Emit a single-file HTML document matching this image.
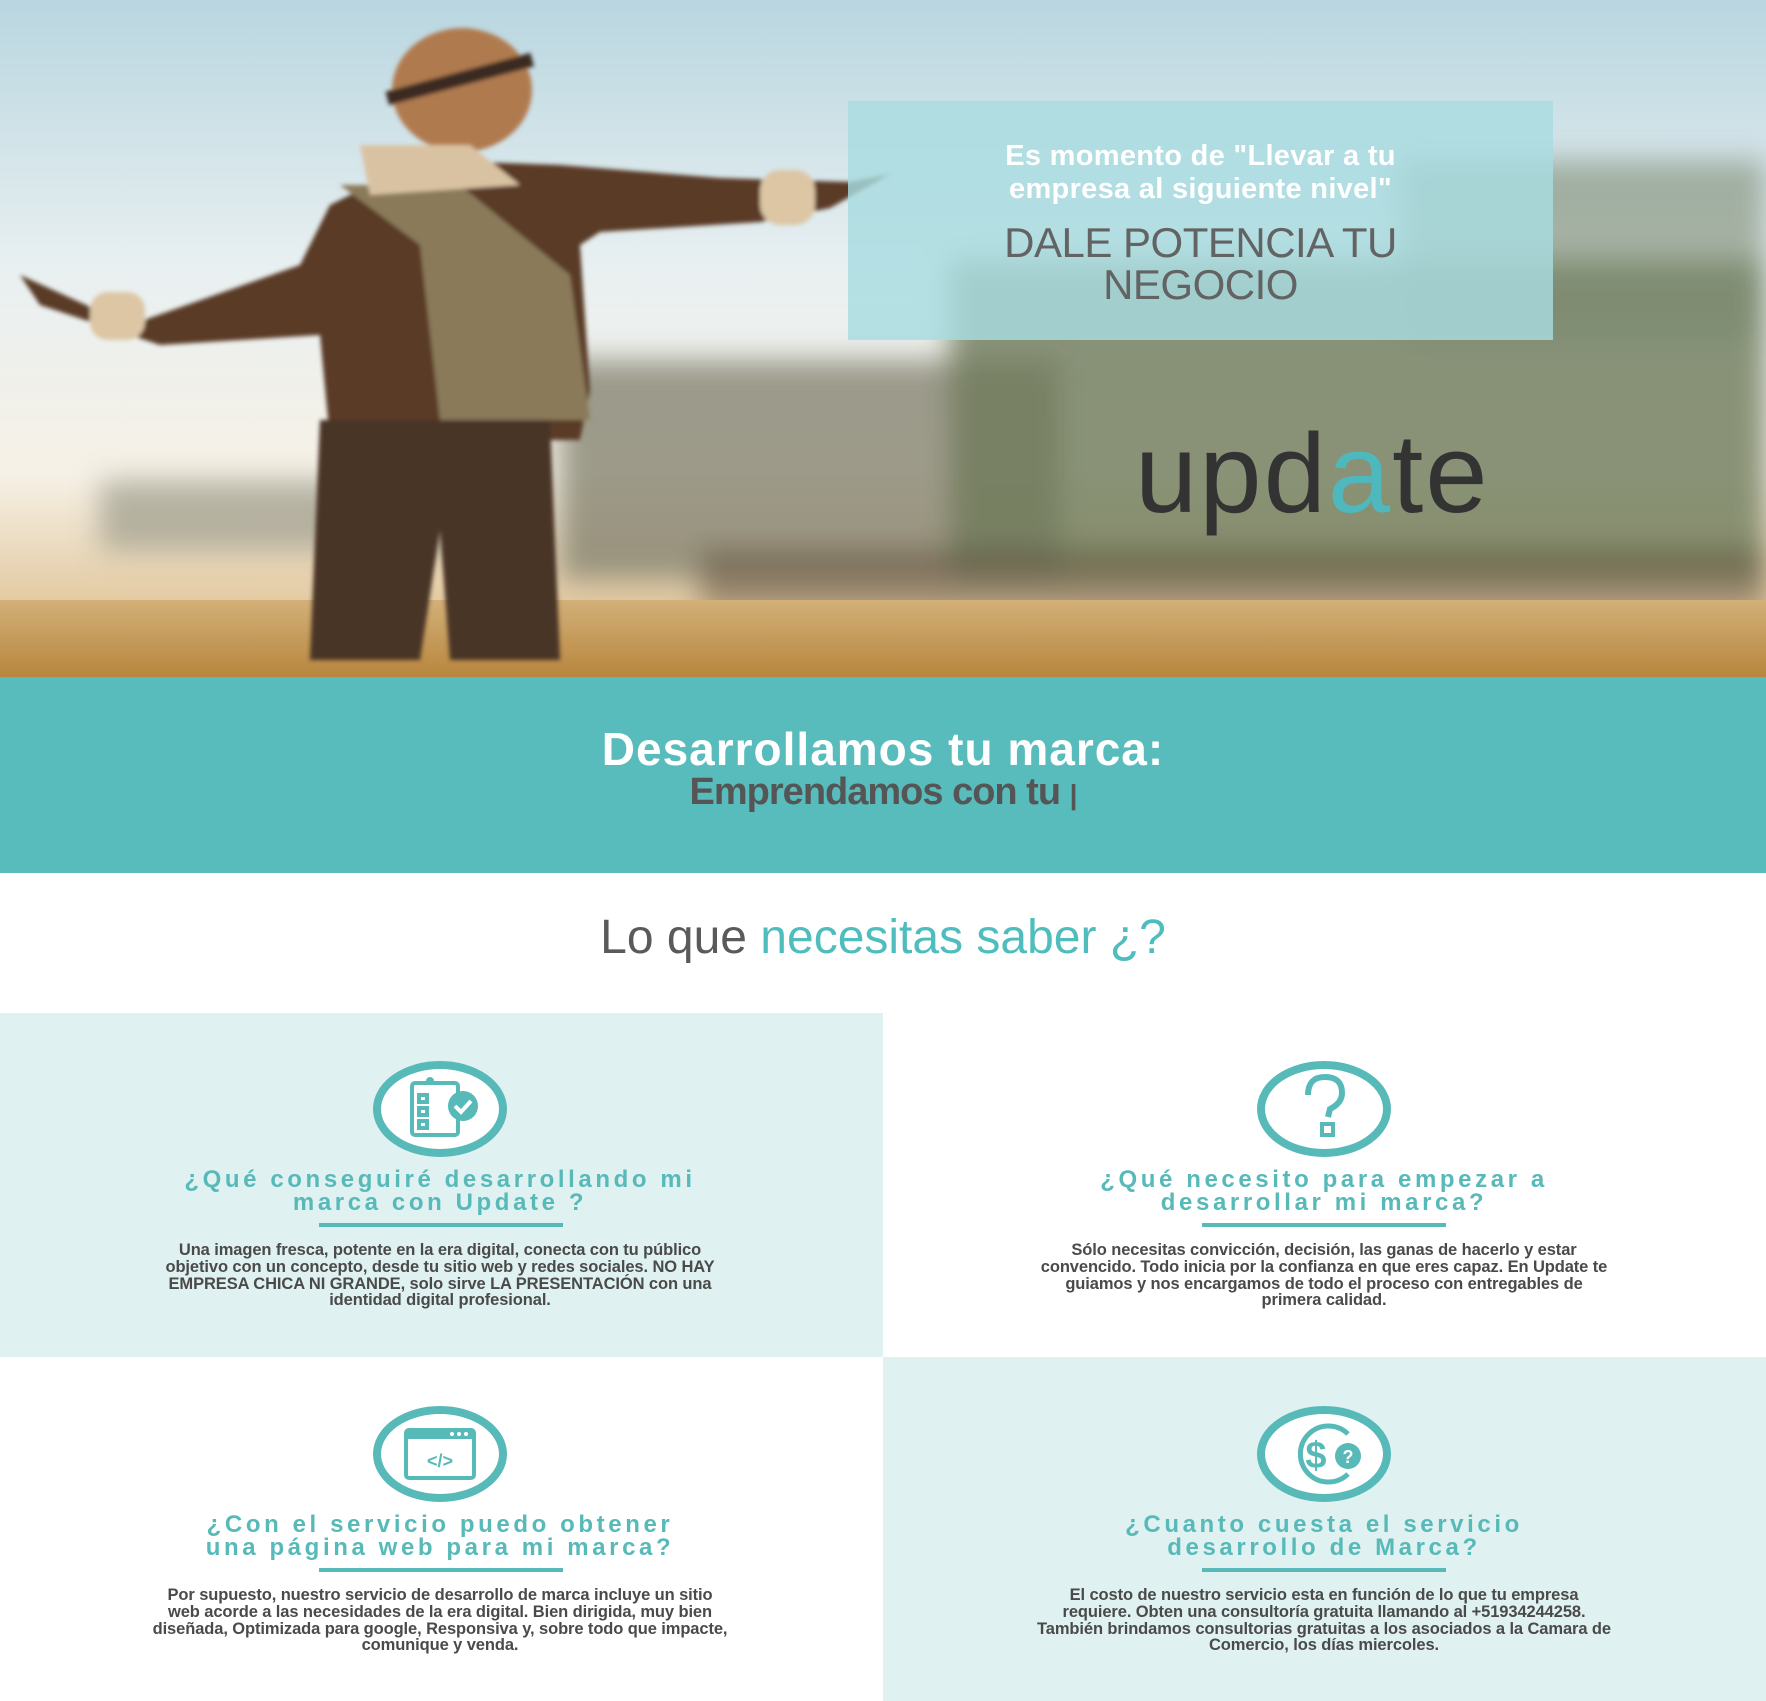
<!DOCTYPE html>
<html><head><meta charset="utf-8">
<style>
*{margin:0;padding:0;box-sizing:border-box}
body{width:1766px;height:1701px;position:relative;overflow:hidden;background:#fff;font-family:"Liberation Sans",sans-serif}
.abs{position:absolute}
.c{text-align:center}
.title{color:#58b9b9;font-size:24px;font-weight:bold;letter-spacing:3.6px;line-height:23px;width:760px;text-align:center}
.ul{height:4px;background:#58b9b9;width:244px}
.body{color:#4a4a4a;font-size:16.5px;font-weight:bold;line-height:16.8px;width:580px;text-align:center;letter-spacing:-0.1px}
</style></head><body>
<svg class="abs" style="left:0;top:0" width="1766" height="677" viewBox="0 0 1766 677">
<defs>
<linearGradient id="sky" x1="0" y1="0" x2="0" y2="1">
<stop offset="0" stop-color="#b9d6e0"/><stop offset="0.4" stop-color="#e9f0f1"/><stop offset="0.7" stop-color="#f6f1e6"/><stop offset="1" stop-color="#d8b37a"/></linearGradient>
<linearGradient id="grass" x1="0" y1="0" x2="0" y2="1"><stop offset="0" stop-color="#d2b078"/><stop offset="1" stop-color="#b8863e"/></linearGradient>
<filter id="b8"><feGaussianBlur stdDeviation="14"/></filter>
<filter id="b2"><feGaussianBlur stdDeviation="2"/></filter>
</defs>
<rect width="1766" height="677" fill="url(#sky)"/>
<g filter="url(#b8)">
<rect x="100" y="480" width="380" height="70" fill="#8d9080" opacity="0.6"/>
<rect x="560" y="360" width="500" height="220" fill="#7f7c6a" opacity="0.75"/>
<rect x="950" y="260" width="816" height="320" fill="#6e7a5a" opacity="0.8"/>
<rect x="1400" y="160" width="366" height="180" fill="#7a8870" opacity="0.6"/>
<rect x="700" y="550" width="1066" height="60" fill="#5a4a38" opacity="0.5"/>
</g>
<rect x="0" y="600" width="1766" height="77" fill="url(#grass)"/>
<g filter="url(#b2)">
<ellipse cx="462" cy="90" rx="70" ry="62" fill="#b07a50"/>
<rect x="385" y="72" width="150" height="14" fill="#3a2a20" transform="rotate(-15 460 80)"/>
<path d="M20 275 L130 325 L300 265 L330 205 L420 160 L560 165 L720 178 L850 182 L890 174 L830 208 L760 222 L600 232 L580 245 L590 390 L580 440 L330 440 L320 335 L160 345 L40 305Z" fill="#5a3a28"/>
<path d="M340 185 L420 245 L440 420 L590 420 L570 275 L460 185Z" fill="#8a7a5a"/>
<path d="M360 145 L470 145 L520 185 L370 195Z" fill="#d9c2a2"/>
<rect x="760" y="170" width="55" height="55" rx="20" fill="#dcc6a4"/>
<rect x="90" y="292" width="55" height="48" rx="18" fill="#dcc6a4"/>
<path d="M320 420 L550 420 L560 660 L450 660 L440 530 L420 660 L310 660Z" fill="#4a3426"/>
</g>
</svg>
<div class="abs" style="left:848px;top:101px;width:705px;height:239px;background:rgba(168,220,224,0.82)"></div>
<div class="abs c" style="left:848px;top:140px;width:705px;color:#fff;font-size:29px;font-weight:bold;line-height:33px;letter-spacing:0.3px">Es momento de "Llevar a tu<br>empresa al siguiente nivel"</div>
<div class="abs c" style="left:848px;top:222px;width:705px;color:#636363;font-size:42px;line-height:42px;letter-spacing:-0.5px">DALE POTENCIA TU<br>NEGOCIO</div>
<div class="abs" style="left:1135px;top:418px;font-size:112px;line-height:112px;color:#333;letter-spacing:2px">upd<span style="color:#4fb8bd">a</span>te</div>
<div class="abs" style="left:0;top:677px;width:1766px;height:196px;background:#58bcbc"></div>
<div class="abs c" style="left:0;top:722px;width:1766px;color:#fff;font-size:46px;font-weight:bold;letter-spacing:1px">Desarrollamos tu marca:</div>
<div class="abs c" style="left:0;top:772px;width:1766px;color:#555;font-size:38px;font-weight:bold;letter-spacing:-1px;line-height:40px">Emprendamos con tu <span style="font-size:28px">|</span></div>
<div class="abs c" style="left:0;top:910px;width:1766px;font-size:48px;color:#5a5a5a;letter-spacing:0px">Lo que <span style="color:#4fbdbd">necesitas saber ¿?</span></div>
<div class="abs" style="left:0;top:1013px;width:883px;height:344px;background:#dff1f0"></div>
<div class="abs" style="left:883px;top:1357px;width:883px;height:344px;background:#dff1f0"></div>

<svg class="abs" style="left:372px;top:1061px" width="136" height="96" viewBox="0 0 136 96"><ellipse cx="68" cy="48" rx="63" ry="44" fill="#fff" stroke="#58b9b9" stroke-width="8"/>
<g fill="none" stroke="#58b9b9" stroke-width="4"><rect x="40" y="22" width="46" height="52" rx="3"/><rect x="47" y="34" width="8" height="7"/><rect x="47" y="47" width="8" height="7"/><rect x="47" y="60" width="8" height="7"/></g>
<circle cx="58" cy="20" r="4" fill="#58b9b9"/><circle cx="91" cy="45" r="15" fill="#58b9b9"/><path d="M83 45 L89 51 L99 40" stroke="#fff" stroke-width="4" fill="none"/></svg>
<svg class="abs" style="left:1256px;top:1061px" width="136" height="96" viewBox="0 0 136 96"><ellipse cx="68" cy="48" rx="63" ry="44" fill="#fff" stroke="#58b9b9" stroke-width="8"/>
<path d="M52 34 Q52 16 69 16 Q86 16 86 32 Q86 42 74 48 L72 56" fill="none" stroke="#58b9b9" stroke-width="6"/><rect x="66" y="63" width="11" height="11" fill="none" stroke="#58b9b9" stroke-width="4"/></svg>
<svg class="abs" style="left:372px;top:1406px" width="136" height="96" viewBox="0 0 136 96"><ellipse cx="68" cy="48" rx="63" ry="44" fill="#fff" stroke="#58b9b9" stroke-width="8"/>
<rect x="34" y="24" width="68" height="48" rx="3" fill="none" stroke="#58b9b9" stroke-width="4"/><rect x="34" y="24" width="68" height="9" fill="#58b9b9"/><circle cx="80" cy="28" r="2" fill="#fff"/><circle cx="87" cy="28" r="2" fill="#fff"/><circle cx="94" cy="28" r="2" fill="#fff"/>
<text x="68" y="61" text-anchor="middle" font-family="Liberation Sans" font-size="18" font-weight="bold" fill="#58b9b9">&lt;/&gt;</text></svg>
<svg class="abs" style="left:1256px;top:1406px" width="136" height="96" viewBox="0 0 136 96"><ellipse cx="68" cy="48" rx="63" ry="44" fill="#fff" stroke="#58b9b9" stroke-width="8"/>
<path d="M92 28 A28 28 0 1 0 92 68" fill="none" stroke="#58b9b9" stroke-width="5"/>
<text x="60" y="62" text-anchor="middle" font-family="Liberation Sans" font-size="38" font-weight="bold" fill="#58b9b9">$</text><circle cx="92" cy="50" r="13" fill="#58b9b9"/><text x="92" y="57" text-anchor="middle" font-family="Liberation Sans" font-size="18" font-weight="bold" fill="#fff">?</text></svg>

<div class="abs title" style="left:60px;top:1168px">¿Qué conseguiré desarrollando mi<br>marca con Update ?</div>
<div class="abs ul" style="left:319px;top:1223px"></div>
<div class="abs body" style="left:150px;top:1242px">Una imagen fresca, potente en la era digital, conecta con tu público objetivo con un concepto, desde tu sitio web y redes sociales. NO HAY EMPRESA CHICA NI GRANDE, solo sirve LA PRESENTACIÓN con una identidad digital profesional.</div>

<div class="abs title" style="left:944px;top:1168px">¿Qué necesito para empezar a<br>desarrollar mi marca?</div>
<div class="abs ul" style="left:1202px;top:1223px"></div>
<div class="abs body" style="left:1034px;top:1242px">Sólo necesitas convicción, decisión, las ganas de hacerlo y estar convencido. Todo inicia por la confianza en que eres capaz. En Update te guiamos y nos encargamos de todo el proceso con entregables de primera calidad.</div>

<div class="abs title" style="left:60px;top:1513px">¿Con el servicio puedo obtener<br>una página web para mi marca?</div>
<div class="abs ul" style="left:319px;top:1568px"></div>
<div class="abs body" style="left:150px;top:1587px">Por supuesto, nuestro servicio de desarrollo de marca incluye un sitio web acorde a las necesidades de la era digital. Bien dirigida, muy bien diseñada, Optimizada para google, Responsiva y, sobre todo que impacte, comunique y venda.</div>

<div class="abs title" style="left:944px;top:1513px">¿Cuanto cuesta el servicio<br>desarrollo de Marca?</div>
<div class="abs ul" style="left:1202px;top:1568px"></div>
<div class="abs body" style="left:1034px;top:1587px">El costo de nuestro servicio esta en función de lo que tu empresa requiere. Obten una consultoría gratuita llamando al +51934244258. También brindamos consultorias gratuitas a los asociados a la Camara de Comercio, los días miercoles.</div>
</body></html>
